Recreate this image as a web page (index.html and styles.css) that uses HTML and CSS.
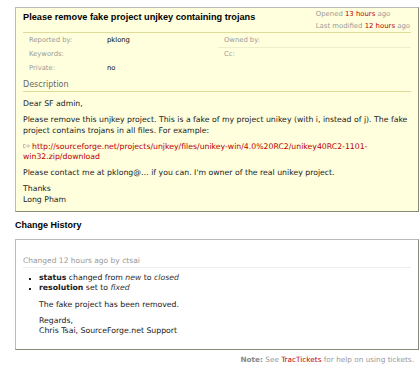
FILE: index.html
```html
<!DOCTYPE html>
<html>
<head>
<meta charset="utf-8">
<link rel="stylesheet" href="styles.css">
</head>
<body>
<div class="ticket">
  <div class="head">
    <h2 class="summary">Please remove fake project unjkey containing trojans</h2>
    <div class="dates">
      <div>Opened <a href="#">13 hours</a> ago</div>
      <div>Last modified <a href="#">12 hours</a> ago</div>
    </div>
  </div>
  <table class="props">
    <tr><th>Reported by:</th><td class="v1">pklong</td><th class="h2c">Owned by:</th><td></td></tr>
    <tr class="r2"><th>Keywords:</th><td class="v1"></td><th class="h2c">Cc:</th><td></td></tr>
    <tr><th>Private:</th><td class="v1">no</td><th class="h2c"></th><td></td></tr>
  </table>
  <h3 class="deschead">Description</h3>
  <div class="desc">
    <p>Dear SF admin,</p>
    <p>Please remove this unjkey project. This is a fake of my project unikey (with i, instead of j). The fake project contains trojans in all files. For example:</p>
    <p><a class="ext" href="#"><svg class="exticon" width="7" height="6" viewBox="0 0 7 6"><path d="M0.5 1.5h2M0.5 4.5h2M0.5 1.5v3M2.5 3h4M4.8 1.3L6.5 3L4.8 4.7" fill="none" stroke="#b8a8a8" stroke-width="0.8"/></svg>http://sourceforge.net/projects/unjkey/files/unikey-win/4.0%20RC2/unikey40RC2-1101-win32.zip/download</a></p>
    <p>Please contact me at pklong@… if you can. I'm owner of the real unikey project.</p>
    <p>Thanks<br>Long Pham</p>
  </div>
</div>
<h2 class="histhead">Change History</h2>
<div class="changelog">
  <div class="changehead">Changed 12 hours ago by ctsai</div>
  <ul class="changes">
    <li><strong>status</strong> changed from <em>new</em> to <em>closed</em></li>
    <li><strong>resolution</strong> set to <em>fixed</em></li>
  </ul>
  <div class="comment">
    <p>The fake project has been removed.</p>
    <p>Regards,<br>Chris Tsai, SourceForge.net Support</p>
  </div>
</div>
<div class="note"><strong>Note:</strong> See <a href="#">TracTickets</a> for help on using tickets.</div>
</body>
</html>
```
FILE: styles.css
```css
html, body { margin: 0; padding: 0; background: #fff; }
body {
  font-family: "DejaVu Sans", Verdana, sans-serif;
  font-size: 7.75px;
  color: #000;
  width: 420px;
  height: 386px;
  overflow: hidden;
}
a { color: #b00; text-decoration: none; }
p { margin: 0; }

.ticket {
  margin: 7px 0 0 15px;
  width: 402px;
  background: #ffd;
  border: 1px solid #bbb;
  border-right-color: #8a8a78;
  border-bottom-color: #8a8a78;
  padding: 1px 0 6px 0;
}
.head {
  display: flex;
  justify-content: space-between;
  margin: 0 7px;
  border-bottom: 1px solid #dd9;
}
.summary {
  font-family: "Liberation Sans", Arial, sans-serif;
  font-size: 9.2px;
  font-weight: bold;
  margin: 3px 0 0 0;
  line-height: 11px;
}
.dates {
  color: #999;
  font-size: 6.9px;
  line-height: 11.5px;
  white-space: nowrap;
  margin: 0 1px 0 0;
}
.props {
  border-collapse: collapse;
  margin: 0 7px;
  width: 388px;
  font-size: 6.8px;
}
.props th {
  text-align: left;
  font-weight: normal;
  color: #999;
  padding: 2px 0 2px 6px;
  height: 9.5px;
  width: 78px;
}
.props td { padding: 2px 0; height: 9.5px; }
.props td.v1 { width: 111px; }
.props th.h2c { width: 60px; }
.props tr.r2 th.h2c, .props tr.r2 th.h2c + td { border-top: 1px solid #eec; }
.deschead {
  font-size: 8px;
  font-weight: normal;
  color: #666;
  margin: 5px 7px 0 7px;
  padding-bottom: 1px;
  border-bottom: 1px solid #dd9;
  line-height: 10px;
}
.desc {
  margin: 7.5px 7px 0 7px;
  line-height: 10.5px;
  color: #222;
}
.desc p + p { margin-top: 5.5px; }
.exticon { vertical-align: 0px; margin-right: 2px; }

.histhead {
  font-family: "Liberation Sans", Arial, sans-serif;
  font-size: 9px;
  font-weight: bold;
  margin: 8px 0 0 15px;
  line-height: 11px;
}
.changelog {
  margin: 7.5px 0 0 15px;
  width: 402px;
  border: 1px solid #bbb;
  border-right-color: #8a8a78;
  border-bottom-color: #8a8a78;
  padding: 16px 0 14px 0;
  color: #222;
}
.changehead {
  color: #999;
  font-size: 7.5px;
  margin: 0 7px;
  padding-bottom: 1px;
  border-bottom: 1px solid #eee;
  line-height: 10px;
}
.changes {
  margin: 5px 0 0 0;
  padding: 0 0 0 23px;
  line-height: 10px;
  list-style: square;
}
.changes li::marker { font-size: 5px; }
.changes em { color: #333; }
.comment {
  margin: 7px 0 0 23px;
  line-height: 9.5px;
}
.comment p + p { margin-top: 7px; }
.note {
  text-align: right;
  margin: 5px 6px 0 0;
  color: #999;
  font-size: 7.3px;
}
.note strong { color: #888; }
```
